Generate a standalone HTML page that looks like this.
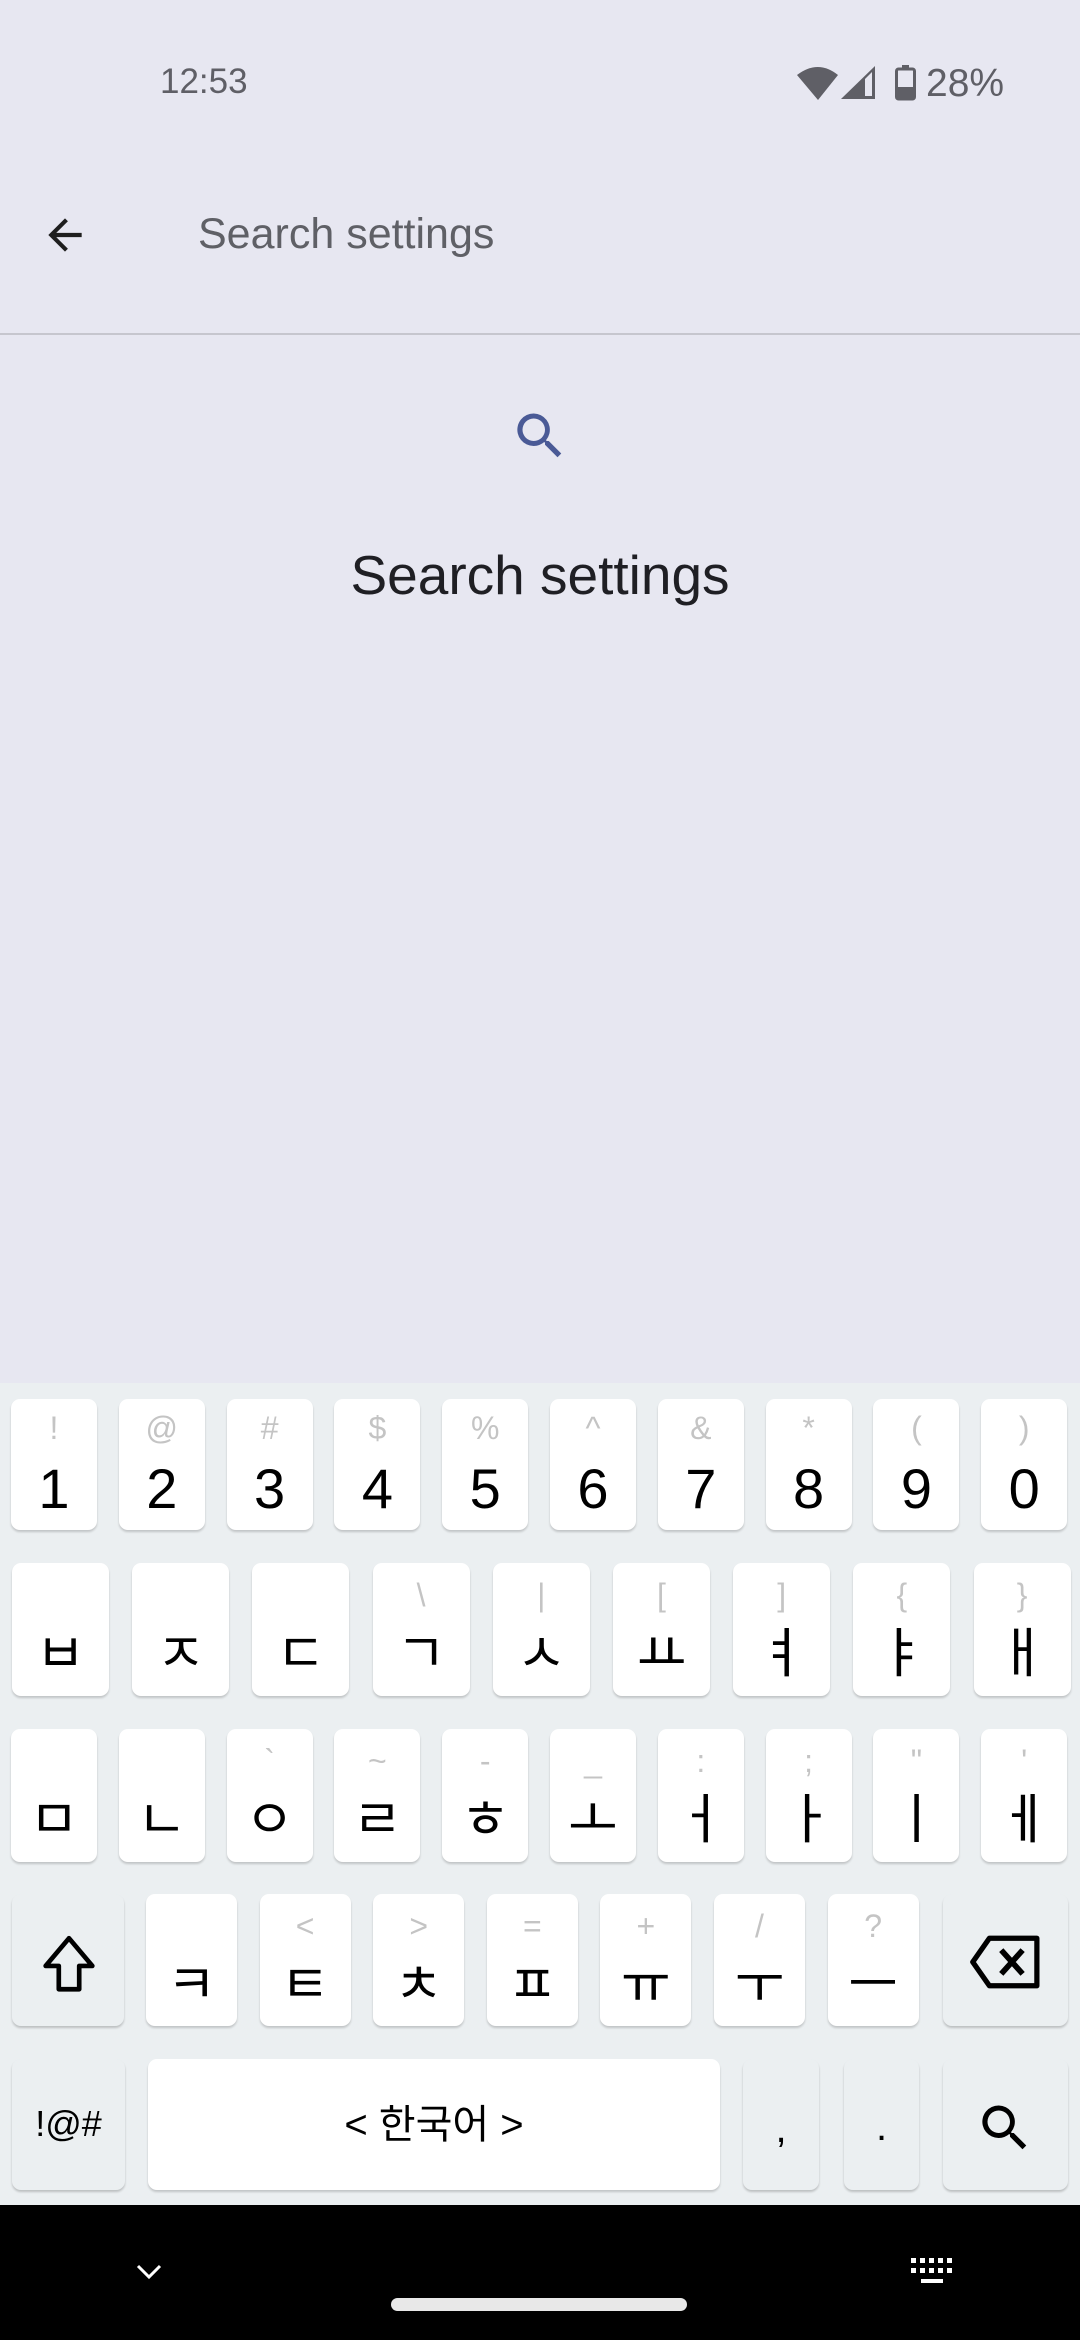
<!DOCTYPE html>
<html><head><meta charset="utf-8"><style>
*{margin:0;padding:0;box-sizing:border-box}
body{width:1080px;height:2340px;background:#e7e7f1;position:relative;overflow:hidden;font-family:"Liberation Sans","Noto Sans CJK KR",sans-serif}
.abs{position:absolute}
.kb{position:absolute;left:0;top:1383px;width:1080px;height:822px;background:#ebeff1}
.k{position:absolute;background:#fff;border-radius:9px;box-shadow:0 2px 2px rgba(0,0,0,.18)}
.k.g{background:#ebeff1;box-shadow:0 2px 2px rgba(0,0,0,.2)}
.k .h{position:absolute;left:0;right:0;text-align:center;color:#c4c4c4;font-size:32px;line-height:1}
.k .m{position:absolute;left:0;right:0;text-align:center;color:#000;line-height:1}
</style></head><body>
<div class="abs" style="left:160px;top:62px;font-size:35px;color:#5f5f66">12:53</div>
<svg class="abs" style="left:797px;top:65px" width="42" height="35" viewBox="0 0 42 35"><path d="M0 10 Q21 -6 41 10 L21 35 Z" fill="#5f5f66"/></svg>
<svg class="abs" style="left:841px;top:66px" width="35" height="34" viewBox="0 0 35 34"><path d="M0 33 L34 0 V33 Z" fill="#5f5f66"/><path d="M24 13 V30 H31 V6 Z" fill="#e7e7f1"/></svg>
<svg class="abs" style="left:895px;top:65px" width="21" height="36" viewBox="0 0 21 36"><rect x="7" y="0" width="7" height="4" fill="#5f5f66"/><rect x="1.5" y="4" width="18" height="30" rx="2" fill="none" stroke="#5f5f66" stroke-width="3"/><rect x="1.5" y="22" width="18" height="12" fill="#5f5f66"/></svg>
<div class="abs" style="left:926px;top:62px;font-size:39px;color:#5f5f66">28%</div>

<svg class="abs" style="left:40px;top:210px" width="50" height="50" viewBox="0 0 24 24"><path d="M20 11H7.8l5.6-5.6L12 4l-8 8 8 8 1.4-1.4L7.8 13H20z" fill="#1f1f1f"/></svg>
<div class="abs" style="left:198px;top:210px;font-size:43px;color:#5f6066">Search settings</div>
<div class="abs" style="left:0;top:333px;width:1080px;height:2px;background:#c6c6ce"></div>

<svg class="abs" style="left:510px;top:406px" width="60" height="60" viewBox="0 0 24 24"><path d="M15.5 14h-.8l-.3-.3A6.5 6.5 0 1 0 9.5 16a6.5 6.5 0 0 0 4.2-1.6l.3.3v.8l5 5 1.5-1.5-5-5zm-6 0A4.5 4.5 0 1 1 14 9.5 4.5 4.5 0 0 1 9.5 14z" fill="#4a5a96"/></svg>
<div class="abs" style="left:0;width:1080px;top:543px;text-align:center;font-size:55px;color:#1f1f24">Search settings</div>

<div class="kb"></div>
<script>
function key(x,y,w,h,hint,main,fs,cls,ht,mt){
 var d=document.createElement('div');d.className='k'+(cls?' '+cls:'');
 d.style.left=x+'px';d.style.top=y+'px';d.style.width=w+'px';d.style.height=h+'px';
 if(hint){var s=document.createElement('div');s.className='h';s.style.top=(ht||26)+'px';s.textContent=hint;d.appendChild(s);}
 if(main){var m=document.createElement('div');m.className='m';m.style.fontSize=fs+'px';m.style.top=mt+'px';m.textContent=main;d.appendChild(m);}
 document.body.appendChild(d);return d;
}
var n='1234567890',h1='!@#$%^&*()';
for(var i=0;i<10;i++)key(11+i*107.8,1399,86,131,h1[i],n[i],56,'',13,62);
var r2='ㅂㅈㄷㄱㅅㅛㅕㅑㅐ',h2=['','','','\\','|','[',']','{','}'];
for(var i=0;i<9;i++)key(12+i*120.2,1563,97,133,h2[i],r2[i],54,'',16,64);
var r3='ㅁㄴㅇㄹㅎㅗㅓㅏㅣㅔ',h3=['','','`','~','-','_',':',';','"',"'"];
for(var i=0;i<10;i++)key(11+i*107.8,1729,86,133,h3[i],r3[i],54,'',16,64);
var r4='ㅋㅌㅊㅍㅠㅜㅡ',h4=['','<','>','=','+','/','?'];
for(var i=0;i<7;i++)key(146+i*113.6,1894,91,132,h4[i],r4[i],54,'',16,64);
key(12,1894,112,132,'','','', 'g');
key(943,1894,125,132,'','','','g');
key(12,2059,113,131,'','!@#',36,'g',0,47);
key(148,2059,572,131,'','< 한국어 >',40,'',0,46);
key(743,2059,76,131,'',',',40,'g',0,50);
key(844,2059,75,131,'','.',40,'g',0,48);
key(943,2059,125,131,'','','','g');
</script>
<svg class="abs" style="left:34px;top:1928px" width="70" height="70" viewBox="0 0 24 24"><path d="M12 3.5 L4 13 H8.5 V21 H15.5 V13 H20 Z" fill="none" stroke="#000" stroke-width="1.6" stroke-linejoin="round"/></svg>
<svg class="abs" style="left:968px;top:1932px" width="76" height="60" viewBox="0 0 32 24"><path d="M9 2 H29 V22 H9 L2 12 Z" fill="none" stroke="#000" stroke-width="2.2" stroke-linejoin="round"/><path d="M14 7 L23 17 M23 7 L14 17" stroke="#000" stroke-width="2.4"/></svg>
<svg class="abs" style="left:975px;top:2098px" width="60" height="60" viewBox="0 0 24 24"><path d="M15.5 14h-.8l-.3-.3A6.5 6.5 0 1 0 9.5 16a6.5 6.5 0 0 0 4.2-1.6l.3.3v.8l5 5 1.5-1.5-5-5zm-6 0A4.5 4.5 0 1 1 14 9.5 4.5 4.5 0 0 1 9.5 14z" fill="#000"/></svg>

<div class="abs" style="left:0;top:2205px;width:1080px;height:135px;background:#000"></div>
<svg class="abs" style="left:134px;top:2262px" width="30" height="20" viewBox="0 0 30 20"><path d="M4 4 L15 15 L26 4" fill="none" stroke="#fff" stroke-width="3"/></svg>
<div class="abs" style="left:391px;top:2298px;width:296px;height:13px;border-radius:7px;background:#e8e8e8"></div>
<svg class="abs" style="left:911px;top:2258px" width="44" height="32" viewBox="0 0 44 32"><g fill="#fff"><rect x="0" y="0" width="5" height="5"/><rect x="9" y="0" width="5" height="5"/><rect x="18" y="0" width="5" height="5"/><rect x="27" y="0" width="5" height="5"/><rect x="36" y="0" width="5" height="5"/><rect x="0" y="10" width="5" height="5"/><rect x="9" y="10" width="5" height="5"/><rect x="18" y="10" width="5" height="5"/><rect x="27" y="10" width="5" height="5"/><rect x="36" y="10" width="5" height="5"/><rect x="10" y="21" width="22" height="4"/></g></svg>
</body></html>
